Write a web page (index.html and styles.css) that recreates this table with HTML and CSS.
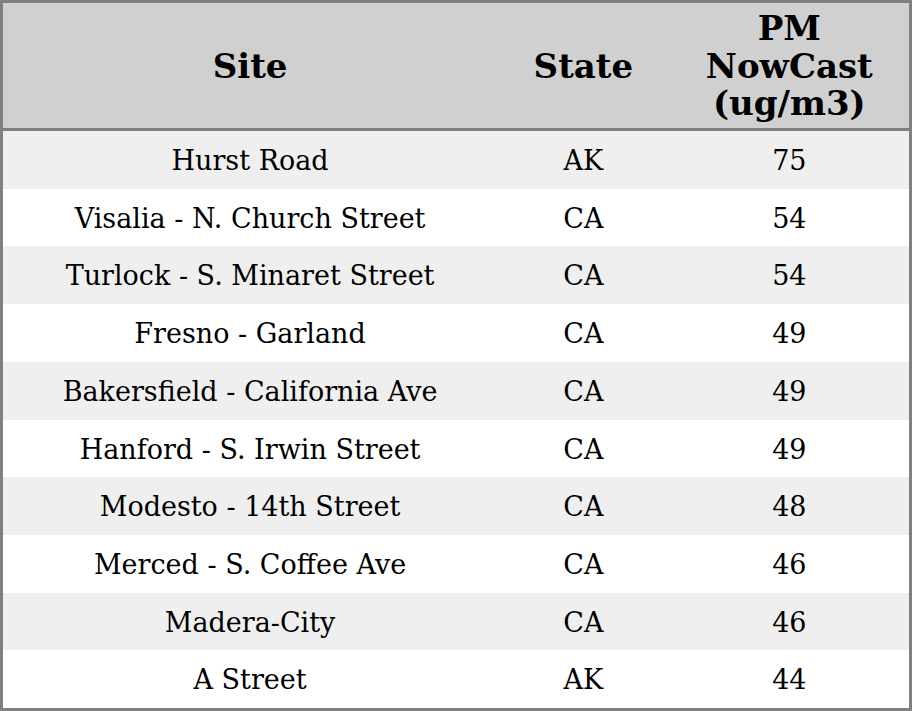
FILE: index.html
```html
<!DOCTYPE html>
<html>
<head>
<meta charset="utf-8">
<link rel="stylesheet" href="styles.css">
</head>
<body>
<table class="pm-table">
  <colgroup>
    <col class="col-site">
    <col class="col-state">
    <col class="col-pm">
  </colgroup>
  <thead>
    <tr><th>Site</th><th>State</th><th>PM NowCast (ug/m3)</th></tr>
  </thead>
  <tbody>
    <tr><td>Hurst Road</td><td>AK</td><td>75</td></tr>
    <tr><td>Visalia - N. Church Street</td><td>CA</td><td>54</td></tr>
    <tr><td>Turlock - S. Minaret Street</td><td>CA</td><td>54</td></tr>
    <tr><td>Fresno - Garland</td><td>CA</td><td>49</td></tr>
    <tr><td>Bakersfield - California Ave</td><td>CA</td><td>49</td></tr>
    <tr><td>Hanford - S. Irwin Street</td><td>CA</td><td>49</td></tr>
    <tr><td>Modesto - 14th Street</td><td>CA</td><td>48</td></tr>
    <tr><td>Merced - S. Coffee Ave</td><td>CA</td><td>46</td></tr>
    <tr><td>Madera-City</td><td>CA</td><td>46</td></tr>
    <tr><td>A Street</td><td>AK</td><td>44</td></tr>
  </tbody>
</table>
</body>
</html>
```
FILE: styles.css
```css
html, body {
  margin: 0;
  padding: 0;
  background: #ffffff;
}
.pm-table {
  width: 912px;
  border-collapse: collapse;
  table-layout: fixed;
  border: 3px solid #808080;
  font-family: "DejaVu Serif", serif;
  color: #000000;
}
.col-site { width: 494px; }
.col-state { width: 172px; }
.col-pm { width: 240px; }
.pm-table th {
  background: #d0d0d0;
  font-size: 34px;
  font-weight: bold;
  line-height: 37.5px;
  padding: 7.25px 10px 5.25px;
  text-align: center;
  border-bottom: 3px solid #808080;
}
.pm-table td {
  font-size: 27px;
  line-height: 31.7px;
  padding: 14px 0 12px;
  text-align: center;
}
.pm-table tbody tr:nth-child(odd) td {
  background: #efefef;
}
```
